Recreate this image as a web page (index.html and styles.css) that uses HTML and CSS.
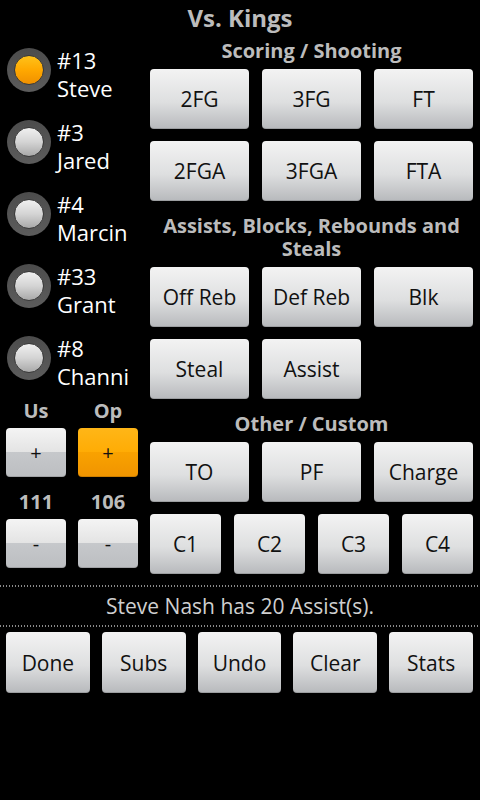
FILE: index.html
```html
<!DOCTYPE html>
<html lang="en">
<head>
    <meta charset="UTF-8">
    <meta name="viewport" content="width=device-width, initial-scale=1.0">
    <title>Vs. Kings - Game Tracker</title>
    <link rel="stylesheet" href="styles.css">
</head>
<body>
    <div class="screen">
        <h1 class="title">Vs. Kings</h1>

        <div class="main">
            <!-- Players and score -->
            <div class="side">
                <div class="players">
                    <div class="player selected">
                        <span class="radio"></span>
                        <div class="name">#13<br>Steve</div>
                    </div>
                    <div class="player">
                        <span class="radio"></span>
                        <div class="name">#3<br>Jared</div>
                    </div>
                    <div class="player">
                        <span class="radio"></span>
                        <div class="name">#4<br>Marcin</div>
                    </div>
                    <div class="player">
                        <span class="radio"></span>
                        <div class="name">#33<br>Grant</div>
                    </div>
                    <div class="player">
                        <span class="radio"></span>
                        <div class="name">#8<br>Channi</div>
                    </div>
                </div>

                <div class="score">
                    <div class="team">
                        <div class="team-label">Us</div>
                        <button class="btn score-btn">+</button>
                        <div class="team-label points">111</div>
                        <button class="btn score-btn">-</button>
                    </div>
                    <div class="team">
                        <div class="team-label">Op</div>
                        <button class="btn score-btn active">+</button>
                        <div class="team-label points">106</div>
                        <button class="btn score-btn">-</button>
                    </div>
                </div>
            </div>

            <!-- Stat buttons -->
            <div class="stats">
                <section class="stat-group">
                    <h2>Scoring / Shooting</h2>
                    <div class="grid three">
                        <button class="btn">2FG</button>
                        <button class="btn">3FG</button>
                        <button class="btn">FT</button>
                        <button class="btn">2FGA</button>
                        <button class="btn">3FGA</button>
                        <button class="btn">FTA</button>
                    </div>
                </section>

                <section class="stat-group">
                    <h2>Assists, Blocks, Rebounds and Steals</h2>
                    <div class="grid three">
                        <button class="btn">Off Reb</button>
                        <button class="btn">Def Reb</button>
                        <button class="btn">Blk</button>
                        <button class="btn">Steal</button>
                        <button class="btn">Assist</button>
                    </div>
                </section>

                <section class="stat-group">
                    <h2>Other / Custom</h2>
                    <div class="grid three">
                        <button class="btn">TO</button>
                        <button class="btn">PF</button>
                        <button class="btn">Charge</button>
                    </div>
                    <div class="grid four">
                        <button class="btn">C1</button>
                        <button class="btn">C2</button>
                        <button class="btn">C3</button>
                        <button class="btn">C4</button>
                    </div>
                </section>
            </div>
        </div>

        <div class="dots"></div>
        <div class="status">Steve Nash has 20 Assist(s).</div>
        <div class="dots"></div>

        <div class="toolbar">
            <button class="btn tool-btn">Done</button>
            <button class="btn tool-btn">Subs</button>
            <button class="btn tool-btn">Undo</button>
            <button class="btn tool-btn">Clear</button>
            <button class="btn tool-btn">Stats</button>
        </div>
    </div>
</body>
</html>
```

FILE: styles.css
```css
* {
    margin: 0;
    padding: 0;
    box-sizing: border-box;
}

body {
    font-family: "Open Sans", "DejaVu Sans", sans-serif;
    background: #000;
    color: #fff;
    width: 480px;
    height: 800px;
    overflow: hidden;
}

.title {
    height: 36px;
    line-height: 36px;
    text-align: center;
    font-size: 24px;
    font-weight: 700;
    color: #bcbcbc;
}

.main {
    display: flex;
}

/* Left column */
.side {
    width: 150px;
    flex-shrink: 0;
}

.player {
    height: 72px;
    display: flex;
    align-items: flex-start;
}

.radio {
    width: 44px;
    height: 44px;
    margin: 12px 0 0 7px;
    border-radius: 50%;
    background: linear-gradient(#4c4c4c, #5c5c5c);
    display: flex;
    align-items: center;
    justify-content: center;
    flex-shrink: 0;
}

.radio::after {
    content: "";
    width: 28px;
    height: 28px;
    border-radius: 50%;
    border: 1px solid #3a3a3a;
    background: linear-gradient(#f0f0f0 0%, #d4d4d4 50%, #a9a9a9 100%);
}

.player.selected .radio::after {
    background: linear-gradient(#ffc21a 0%, #ffa800 50%, #f09000 100%);
}

.name {
    margin-left: 6px;
    padding-top: 10px;
    font-size: 22px;
    line-height: 28px;
    color: #fff;
}

.score {
    display: flex;
    gap: 12px;
    padding-left: 6px;
    margin-top: 3px;
}

.team {
    width: 60px;
    display: flex;
    flex-direction: column;
}

.team-label {
    height: 24px;
    line-height: 24px;
    text-align: center;
    font-size: 20px;
    font-weight: 700;
    color: #bcbcbc;
}

.team-label.points {
    margin-top: 13px;
}

/* Buttons */
.btn {
    font-family: inherit;
    font-size: 21px;
    color: #111;
    border: none;
    border-radius: 4px;
    background: linear-gradient(#f3f3f3 0%, #dedfe0 55%, #b7b9bc 100%);
    box-shadow: inset 0 -1px 0 rgba(0, 0, 0, 0.15);
    cursor: pointer;
}

.score-btn {
    height: 49px;
    margin-top: 4px;
    font-size: 20px;
    background: linear-gradient(#f4f4f4 0%, #e4e4e4 48%, #c6c8cb 49%, #bcbec1 100%);
}

.team-label + .score-btn {
    margin-top: 5px;
}

.score-btn.active {
    background: linear-gradient(#ffb617 0%, #ffac05 48%, #f9a200 49%, #f09400 100%);
}

/* Right column */
.stats {
    width: 330px;
    padding-right: 7px;
}

.stat-group + .stat-group {
    margin-top: 10px;
}

.stat-group h2 {
    padding-top: 3px;
    margin-bottom: 7px;
    text-align: center;
    font-size: 20px;
    line-height: 23px;
    font-weight: 700;
    color: #bcbcbc;
}

.grid {
    display: grid;
    gap: 12px 13px;
}

.grid.three {
    grid-template-columns: repeat(3, 1fr);
}

.grid.four {
    grid-template-columns: repeat(4, 1fr);
    margin-top: 12px;
}

.grid .btn {
    height: 60px;
}

/* Bottom area */
.dots {
    height: 2px;
    background: repeating-linear-gradient(90deg, #8a8a8a 0 1px, transparent 1px 3px);
}

.main + .dots {
    margin-top: 11px;
}

.status {
    height: 38px;
    line-height: 38px;
    text-align: center;
    font-size: 21px;
    color: #cfcfcf;
}

.toolbar {
    display: flex;
    gap: 12px;
    padding: 0 7px 0 6px;
    margin-top: 5px;
}

.tool-btn {
    flex: 1;
    height: 61px;
}
```
